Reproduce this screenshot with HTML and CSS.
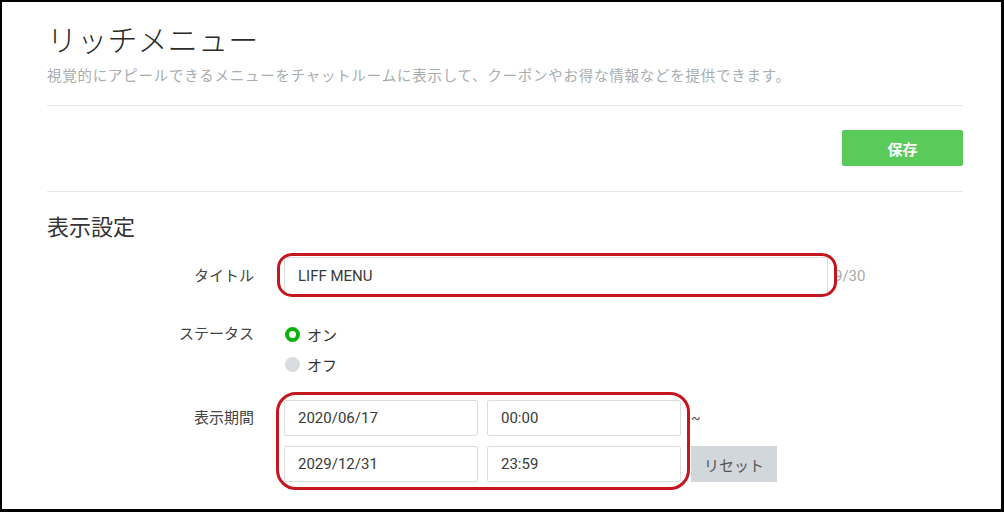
FILE: index.html
```html
<!DOCTYPE html>
<html lang="ja">
<head>
<meta charset="utf-8">
<link rel="stylesheet" href="styles.css">
</head>
<body>
<div class="frame">
  <header class="page-head">
    <h1 class="page-title">リッチメニュー</h1>
    <p class="page-desc">視覚的にアピールできるメニューをチャットルームに表示して、クーポンやお得な情報などを提供できます。</p>
  </header>
  <div class="actions">
    <button class="btn-save" type="button">保存</button>
  </div>
  <section class="settings">
    <h2 class="section-title">表示設定</h2>
    <div class="form">
      <div class="row row-title">
        <div class="label">タイトル</div>
        <div class="field">
          <div class="annot-wrap title-wrap">
            <div class="input title-input">LIFF MENU</div>
            <span class="annot annot-title"></span>
          </div>
          <span class="counter">9/30</span>
        </div>
      </div>
      <div class="row row-status">
        <div class="label">ステータス</div>
        <div class="field radios">
          <label class="radio"><span class="dot dot-on"></span>オン</label>
          <label class="radio"><span class="dot dot-off"></span>オフ</label>
        </div>
      </div>
      <div class="row row-period">
        <div class="label">表示期間</div>
        <div class="field period">
          <div class="annot-wrap period-grid">
            <div class="input">2020/06/17</div>
            <div class="input">00:00</div>
            <div class="input">2029/12/31</div>
            <div class="input">23:59</div>
            <span class="annot annot-period"></span>
          </div>
          <div class="period-side">
            <span class="tilde">~</span>
            <button class="btn-reset" type="button">リセット</button>
          </div>
        </div>
      </div>
    </div>
  </section>
</div>
</body>
</html>
```

FILE: styles.css
```css
* { box-sizing: border-box; }
html, body { margin: 0; padding: 0; background: #000; }
body {
  width: 1004px;
  height: 512px;
  overflow: hidden;
  font-family: Roboto, "Noto Sans CJK JP", sans-serif;
  color: #333;
}
.frame {
  width: 1004px;
  height: 512px;
  background: #fff;
  border-style: solid;
  border-color: #000;
  border-width: 2px 3px 3px 2px;
  padding: 0 38px 0 45px;
}
.page-head {
  padding-top: 19px;
  border-bottom: 1px solid #e6e6e6;
  padding-bottom: 17px;
}
.page-title {
  margin: 0;
  font-size: 30px;
  line-height: 40px;
  font-weight: 300;
  color: #2b2b2b;
  letter-spacing: 0.2px;
}
.page-desc {
  margin: 5px 0 0;
  font-size: 14.5px;
  line-height: 22px;
  color: #a8adb0;
  letter-spacing: 0.75px;
}
.actions {
  display: flex;
  justify-content: flex-end;
  padding: 24px 0 25px;
  border-bottom: 1px solid #e6e6e6;
}
.btn-save {
  width: 121px;
  height: 36px;
  border: none;
  border-radius: 2px;
  background: #5acb5a;
  color: #fff;
  font-family: inherit;
  font-size: 15px;
  font-weight: 700;
  padding: 0;
}
.section-title {
  margin: 21px 0 0;
  font-size: 22px;
  line-height: 30px;
  font-weight: 400;
  color: #333;
}
.form {
  margin-top: 14px;
  display: flex;
  flex-direction: column;
}
.row {
  display: grid;
  grid-template-columns: 207px 1fr;
  column-gap: 30px;
}
.label {
  text-align: right;
  font-size: 15px;
  line-height: 38px;
  color: #444;
}
.field {
  display: flex;
  align-items: center;
}
.annot-wrap { position: relative; }
.annot {
  position: absolute;
  border: 3px solid #c4161f;
  pointer-events: none;
}
.input {
  height: 36px;
  border: 1px solid #dcdcdc;
  border-radius: 2px;
  background: #fff;
  padding: 0 13px;
  font-size: 15px;
  line-height: 34px;
  color: #3a3a3a;
}
.title-wrap { width: 544px; }
.title-input { height: 38px; line-height: 36px; }
.annot-title {
  left: -7px; right: -9px; top: -4px; bottom: -2px;
  border-radius: 15px;
}
.counter {
  margin-left: 6px;
  font-size: 15px;
  color: #aaa;
}
.row-status { margin-top: 24px; }
.row-status .label { line-height: 30px; }
.radios {
  flex-direction: column;
  align-items: flex-start;
}
.radio {
  display: flex;
  align-items: center;
  height: 30px;
  font-size: 15px;
  color: #333;
}
.dot {
  width: 15px;
  height: 15px;
  border-radius: 50%;
  margin-right: 7px;
  margin-left: 1px;
}
.dot-on { border: 4.5px solid #0cb20c; background: #fff; }
.dot-off { background: #d8dbdf; }
.row-period { margin-top: 21px; }
.row-period .label { line-height: 36px; }
.period { align-items: flex-start; }
.period-grid {
  display: grid;
  grid-template-columns: 194px 194px;
  column-gap: 9px;
  row-gap: 10px;
}
.annot-period {
  left: -8px; right: -9px; top: -8px; bottom: -8px;
  border-radius: 20px;
}
.period-side {
  display: flex;
  flex-direction: column;
  margin-left: 10px;
}
.tilde {
  height: 36px;
  line-height: 36px;
  font-size: 14px;
  color: #555;
  margin-bottom: 10px;
}
.btn-reset {
  width: 86px;
  height: 36px;
  border: none;
  border-radius: 0;
  background: #d2d7db;
  color: #555;
  font-family: inherit;
  font-size: 15px;
  padding: 0;
}
```
